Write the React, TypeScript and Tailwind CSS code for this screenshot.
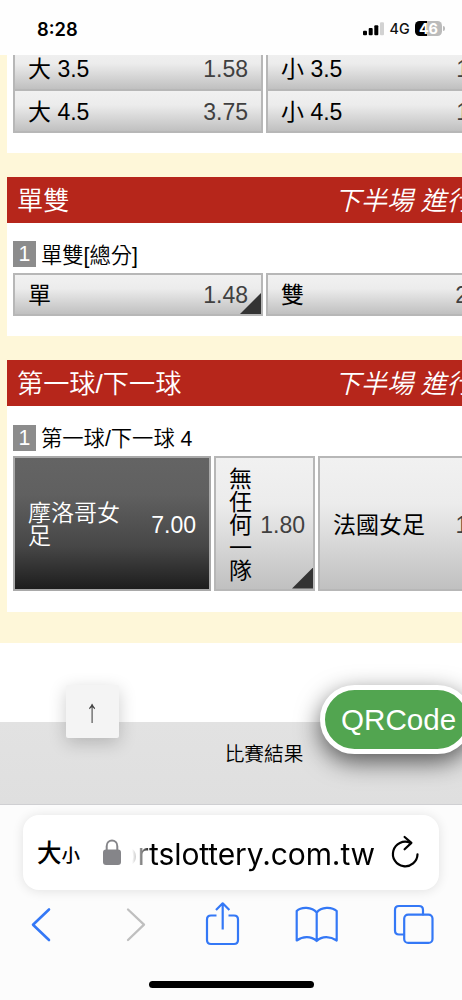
import React from 'react';

function StatusBar() {
  return (
    <div className="flex h-[55px] shrink-0 items-start justify-between bg-[#fefefe] pl-[37px] pr-[17.5px] pt-[16.5px] font-['Inter']">
      <span className="text-[18.3px] font-semibold leading-[24px] text-black">8:28</span>
      <div className="flex h-[24px] items-center">
        <svg className="h-[14px] w-[22px]" viewBox="0 0 22 14">
          <rect x="0" y="8.7" width="4" height="4.6" rx="1" fill="#000" />
          <rect x="5.7" y="6" width="4" height="7.3" rx="1" fill="#000" />
          <rect x="11.3" y="3.3" width="4" height="10" rx="1" fill="#000" />
          <rect x="17" y="0.3" width="4" height="13" rx="1" fill="#d2d2d2" />
        </svg>
        <span className="ml-[5px] w-[20px] text-[14.3px] font-medium leading-[24px] text-[#111]">4G</span>
        <div className="ml-[5px] flex h-[15px] w-[27.5px] items-center justify-center rounded-[4.5px] bg-[linear-gradient(90deg,#000_46%,#bbb_46%)] text-[14.5px] font-bold leading-[15px] tracking-[-0.4px] text-white">
          46
        </div>
        <div className="ml-[1px] h-[5px] w-[1.5px] rounded-r bg-[#bbb]" />
      </div>
    </div>
  );
}

interface OddsCellProps {
  name: string;
  odds: string;
  className?: string;
  nameClassName?: string;
  selected?: boolean;
  corner?: boolean;
}

function OddsCell({ name, odds, className = '', nameClassName = '', selected = false, corner = false }: OddsCellProps) {
  const look = selected
    ? 'border-[#a9a9a9] bg-[linear-gradient(180deg,#646464_0%,#606060_28%,#464646_68%,#1d1d1d_100%)] text-white'
    : 'border-[#b7b7b7] bg-[linear-gradient(180deg,#f1f1f1_0%,#ececec_35%,#c0c0c0_100%)] text-black';
  return (
    <div className={`relative flex shrink-0 items-center justify-between border-2 pl-[13px] pr-[13px] text-[23px] leading-[23px] ${look} ${className}`}>
      <span className={nameClassName}>{name}</span>
      <span className={selected ? 'text-white' : 'text-[#404040]'}>{odds}</span>
      {corner && (
        <div className="absolute bottom-0 right-0 h-[21px] w-[21px] bg-[#333] [clip-path:polygon(100%_0,100%_100%,0_100%)]" />
      )}
    </div>
  );
}

function SectionHeader({ title }: { title: string }) {
  return (
    <div className="flex h-[46px] items-center justify-between bg-[#b6261b] pl-[10.5px] pr-[16px] pt-px text-[26.2px] font-[350] leading-[46px] text-white">
      <span>{title}</span>
      <span className="italic">下半場 進行中</span>
    </div>
  );
}

function MarketLabel({ text }: { text: string }) {
  return (
    <div className="flex h-[26px] items-center text-[21.3px] font-[350] leading-[28px] text-black">
      <span className="mr-[5px] flex h-[26px] w-[23px] items-center justify-center bg-[#8c8c8c] text-white">1</span>
      <span className="pt-[3px]">{text}</span>
    </div>
  );
}

function BrowserBar() {
  return (
    <div className="flex h-[196px] shrink-0 flex-col items-center border-t border-[#cfcfd2] bg-[#fcfcfc]">
      <div className="mt-[10px] flex h-[75px] w-[416px] items-center rounded-[16px] bg-white pl-[14px] shadow-[0_1px_12px_rgba(0,0,0,0.11)]">
        <div className="flex w-[66px] items-baseline pt-[4px] font-medium text-black">
          <span className="text-[24.5px]">大</span>
          <span className="text-[18.5px]">小</span>
        </div>
        <svg className="h-[27px] w-[18px]" viewBox="0 0 18 27">
          <rect x="0" y="10.5" width="18" height="15.5" rx="3" fill="#858589" />
          <path d="M3.7 12V7.2C3.7 -0.3 14.3 -0.3 14.3 7.2V12" fill="none" stroke="#858589" strokeWidth="2" />
        </svg>
        <div className="ml-[11px] flex h-[44px] w-[243px] items-center justify-end overflow-hidden whitespace-nowrap pt-[2px] font-['Inter'] text-[30px] leading-[44px] tracking-[-0.1px] text-black [mask-image:linear-gradient(90deg,transparent,#000_20px)]">
          sportslottery.com.tw
        </div>
        <svg className="ml-[15px] h-[36px] w-[32px]" viewBox="0 0 32 36" fill="none" stroke="#000" strokeWidth="2.2" strokeLinecap="round" strokeLinejoin="round">
          <path d="M20 7.7A12.3 12.3 0 1 0 27.5 19.3" />
          <path d="M14.6 2L21.4 7.9L14.6 14.3" />
        </svg>
      </div>
      <svg className="h-[70px] w-[462px]" viewBox="0 0 462 70" fill="none" stroke="#3478f6" strokeWidth="2.2" strokeLinecap="round" strokeLinejoin="round">
        <path d="M49 19.5L33 34.7L49 50" strokeWidth="2.6" />
        <path d="M128 19.5L144 34.7L128 50" stroke="#bfbfbf" strokeWidth="2.3" />
        <path d="M216.5 25.5H211Q207 25.5 207 29.5V50Q207 54 211 54H234Q238 54 238 50V29.5Q238 25.5 234 25.5H228.5M222.7 39.5V13.5M216 20L222.7 13.3L229.4 20" strokeLinecap="butt" />
        <path d="M316.7 22.5C312 16.5 301 16.5 296.7 21V50.5C303 46 311 46 316.7 51C322 46 330 46 336.7 50.5V21C332 16.5 321 16.5 316.7 22.5ZM316.7 23V51" />
        <path d="M404 44.5H399Q395 44.5 395 40.5V20Q395 16 399 16H419Q423 16 423 20V24.5" />
        <rect x="404.2" y="24.6" width="28.3" height="28.3" rx="4" />
      </svg>
      <div className="mt-[21px] h-[7px] w-[165px] shrink-0 rounded-full bg-black" />
    </div>
  );
}

export default function App() {
  return (
    <div className="flex h-[1000px] w-[462px] flex-col overflow-hidden bg-white font-['Liberation_Sans','Noto_Sans_CJK_TC',sans-serif]">
      <StatusBar />

      <div className="relative flex h-[749px] shrink-0 flex-col overflow-hidden bg-white">
        <div className="h-[588px] w-[515px] shrink-0 bg-[#fef7d9] pl-[6.5px]">
          <div className="h-[98px] overflow-hidden bg-white pl-[6.5px]">
            <div className="-mt-[7px] flex gap-[3px]">
              <OddsCell name="大 3.5" odds="1.58" className="h-[43px] w-[250px]" />
              <OddsCell name="小 3.5" odds="1.95" className="h-[43px] w-[250px]" />
            </div>
            <div className="flex gap-[3px]">
              <OddsCell name="大 4.5" odds="3.75" className="h-[42px] w-[250px] border-t-0 pt-[3px]" />
              <OddsCell name="小 4.5" odds="1.15" className="h-[42px] w-[250px] border-t-0 pt-[3px]" />
            </div>
          </div>

          <div className="mt-[24px] h-[159px] bg-white">
            <SectionHeader title="單雙" />
            <div className="pl-[6.5px] pt-[18px]">
              <MarketLabel text="單雙[總分]" />
              <div className="mt-[6px] flex gap-[3px]">
                <OddsCell name="單" odds="1.48" corner className="h-[43px] w-[250px] pt-[2px]" />
                <OddsCell name="雙" odds="2.15" className="h-[43px] w-[249px] pt-[2px]" />
              </div>
            </div>
          </div>

          <div className="mt-[24px] h-[251.5px] bg-white">
            <SectionHeader title="第一球/下一球" />
            <div className="pl-[6.5px] pt-[18.5px]">
              <MarketLabel text="第一球/下一球 4" />
              <div className="mt-[5px] flex gap-[3px]">
                <OddsCell name="摩洛哥女足" odds="7.00" selected className="h-[135px] w-[198px] pt-[4px]" nameClassName="w-[93px] font-[350]" />
                <OddsCell name="無任何一隊" odds="1.80" corner className="h-[135px] w-[101px] !pr-[8px] pt-[4px]" nameClassName="w-[24px]" />
                <OddsCell name="法國女足" odds="15.00" className="h-[135px] w-[210px] pt-[4px]" />
              </div>
            </div>
          </div>
        </div>

        <div className="mt-[79px] flex h-[82px] items-start justify-center bg-[linear-gradient(180deg,#e2e2e2,#dfdfdf)] pl-[66px] pt-[18px] text-[19.7px] font-[350] leading-[28px] text-black">
          比賽結果
        </div>

        {/* floating buttons */}
        <div className="absolute left-[66px] top-[630px] flex h-[53px] w-[53px] items-center justify-center rounded-[2px] bg-[#f4f4f4] pr-px text-[25px] text-[#444] shadow-[0_5px_18px_rgba(0,0,0,0.2)]">
          <span className="scale-y-[1.3]">↑</span>
        </div>
        <div className="absolute left-[320px] top-[630px] flex h-[69px] w-[152px] items-center rounded-full border-[5px] border-white bg-[#52a550] pl-[16px] text-[29.6px] leading-none text-white shadow-[0_8px_25px_rgba(0,0,0,0.62)]">
          QRCode
        </div>
      </div>

      <BrowserBar />
    </div>
  );
}
